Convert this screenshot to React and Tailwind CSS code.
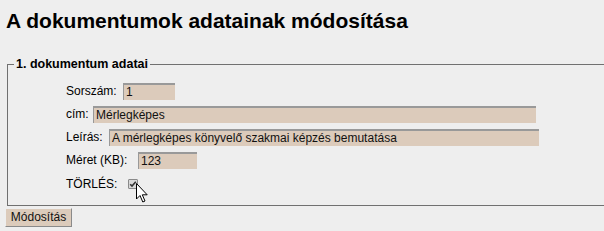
import React from "react";

const inputCls =
  "h-[17px] bg-[#dccbbb] border-t-2 border-l border-t-[#999999] border-l-[#999999] px-[2px] text-[12px] leading-[15px] text-[#111] flex items-center";

function Row({ label, labelWidth, value, width }) {
  return (
    <div className="h-[23px] flex items-start">
      <span className="text-[12px] leading-[17px] shrink-0" style={{ width: labelWidth }}>
        {label}
      </span>
      <div className={inputCls} style={{ width }}>
        {value}
      </div>
    </div>
  );
}

export default function App() {
  return (
    <div
      className="w-[604px] h-[231px] overflow-hidden bg-[#eeeeee] text-black px-[6px] relative"
      style={{ fontFamily: '"Liberation Sans", Arial, sans-serif' }}
    >
      <h1 className="text-[21px] leading-[24px] font-bold pt-[9px]">
        A dokumentumok adatainak módosítása
      </h1>

      <fieldset className="mt-[24px] ml-[1px] w-[640px] border border-[#707070] px-[6px] pb-[12px] pt-[12px]">
        <legend className="px-[2px] text-[12.5px] leading-[14px] font-bold">1. dokumentum adatai</legend>
        <div className="pl-[52px]">
          <Row label="Sorszám:" labelWidth="57px" value="1" width="52px" />
          <Row label="cím:" labelWidth="27px" value="Mérlegképes" width="443px" />
          <Row label="Leírás:" labelWidth="43px" value="A mérlegképes könyvelő szakmai képzés bemutatása" width="430px" />
          <Row label="Méret (KB):" labelWidth="72px" value="123" width="59px" />
          <div className="h-[18px] flex items-center">
            <span className="text-[12px] leading-[17px] w-[62px] shrink-0">TÖRLÉS:</span>
            <span className="w-[10px] h-[10px] border border-[#8a8a8a] bg-[#d8d8d8] rounded-[1px] flex items-center justify-center">
              <svg width="8" height="8" viewBox="0 0 8 8">
                <path d="M1.2 4.2 L3 6 L6.8 1.8" stroke="#333" strokeWidth="1.6" fill="none" />
              </svg>
            </span>
          </div>
        </div>
      </fieldset>

      <button className="mt-[2px] h-[19px] w-[67px] bg-[#dccbbb] border border-t-[#eeeeee] border-l-[#eeeeee] border-r-[#8a8a8a] border-b-[#8a8a8a] text-[12px] leading-[15px] text-[#111] flex items-center justify-center ml-[-1px]">
        Módosítás
      </button>

      <svg
        className="absolute left-[136px] top-[183px]"
        width="13"
        height="21"
        viewBox="0 0 13 21"
      >
        <path
          d="M0.5 0.5 L0.5 16 L4 12.5 L6.8 19 L9 18 L6.3 11.8 L11.2 11.8 Z"
          fill="#fff"
          stroke="#000"
          strokeWidth="1"
          strokeLinejoin="round"
        />
      </svg>
    </div>
  );
}
